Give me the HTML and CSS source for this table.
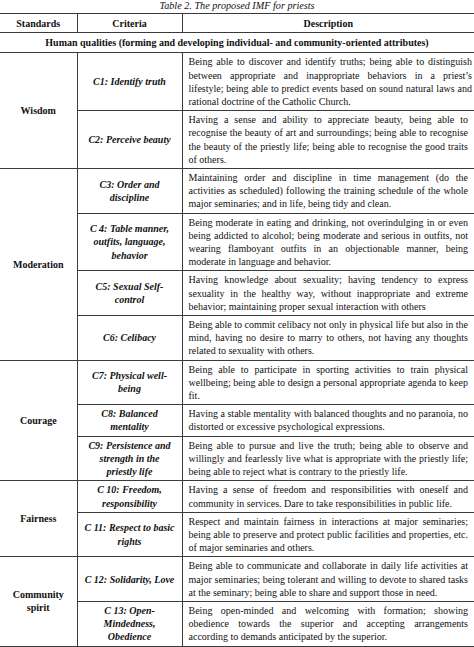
FILE: index.html
```html
<!DOCTYPE html>
<html lang="en">
<head>
<meta charset="utf-8">
<title>Table 2. The proposed IMF for priests</title>
<link rel="stylesheet" href="styles.css">
</head>
<body>
<div class="page">
  <p class="caption">Table 2. The proposed IMF for priests</p>
  <table class="imf">
    <colgroup>
      <col class="c-std">
      <col class="c-crit">
      <col class="c-desc">
    </colgroup>
    <thead>
      <tr class="head">
        <th>Standards</th>
        <th>Criteria</th>
        <th>Description</th>
      </tr>
    </thead>
    <tbody>
      <tr class="section">
        <td colspan="3">Human qualities (forming and developing individual- and community-oriented attributes)</td>
      </tr>
      <tr>
        <td class="std" rowspan="2">Wisdom</td>
        <td class="crit">C1: Identify truth</td>
        <td class="desc desc-wide"><span class="keep">Being able to discover and identify truths; being able to distinguish between appropriate and inappropriate behaviors in a priest’s</span> lifestyle; being able to predict events based on sound natural laws and rational doctrine of the Catholic Church.</td>
      </tr>
      <tr>
        <td class="crit">C2: Perceive beauty</td>
        <td class="desc">Having a sense and ability to appreciate beauty, being able to recognise the beauty of art and surroundings; being able to recognise the beauty of the priestly life; being able to recognise the good traits of others.</td>
      </tr>
      <tr>
        <td class="std" rowspan="4">Moderation</td>
        <td class="crit">C3: Order and discipline</td>
        <td class="desc">Maintaining order and discipline in time management (do the activities as scheduled) following the training schedule of the whole major seminaries; and in life, being tidy and clean.</td>
      </tr>
      <tr>
        <td class="crit">C 4: Table manner, outfits, language, behavior</td>
        <td class="desc">Being moderate in eating and drinking, not overindulging in or even being addicted to alcohol; being moderate and serious in outfits, not wearing flamboyant outfits in an objectionable manner, being moderate in language and behavior.</td>
      </tr>
      <tr>
        <td class="crit">C5: Sexual Self-control</td>
        <td class="desc">Having knowledge about sexuality; having tendency to express sexuality in the healthy way, without inappropriate and extreme behavior; maintaining proper sexual interaction with others</td>
      </tr>
      <tr>
        <td class="crit">C6: Celibacy</td>
        <td class="desc">Being able to commit celibacy not only in physical life but also in the mind, having no desire to marry to others, not having any thoughts related to sexuality with others.</td>
      </tr>
      <tr>
        <td class="std" rowspan="3">Courage</td>
        <td class="crit">C7: Physical well-being</td>
        <td class="desc">Being able to participate in sporting activities to train physical wellbeing; being able to design a personal appropriate agenda to keep fit.</td>
      </tr>
      <tr>
        <td class="crit">C8: Balanced mentality</td>
        <td class="desc">Having a stable mentality with balanced thoughts and no paranoia, no distorted or excessive psychological expressions.</td>
      </tr>
      <tr>
        <td class="crit">C9: Persistence and strength in the priestly life</td>
        <td class="desc">Being able to pursue and live the truth; being able to observe and willingly and fearlessly live what is appropriate with the priestly life; being able to reject what is contrary to the priestly life.</td>
      </tr>
      <tr>
        <td class="std" rowspan="2">Fairness</td>
        <td class="crit">C 10: Freedom, responsibility</td>
        <td class="desc">Having a sense of freedom and responsibilities with oneself and community in services. Dare to take responsibilities in public life.</td>
      </tr>
      <tr>
        <td class="crit">C 11: Respect to basic rights</td>
        <td class="desc">Respect and maintain fairness in interactions at major seminaries; being able to preserve and protect public facilities and properties, etc. of major seminaries and others.</td>
      </tr>
      <tr>
        <td class="std" rowspan="2">Community spirit</td>
        <td class="crit">C 12: Solidarity, Love</td>
        <td class="desc">Being able to communicate and collaborate in daily life activities at major seminaries; being tolerant and willing to devote to shared tasks at the seminary; being able to share and support those in need.</td>
      </tr>
      <tr>
        <td class="crit">C 13: Open-Mindedness, Obedience</td>
        <td class="desc">Being open-minded and welcoming with formation; showing obedience towards the superior and accepting arrangements according to demands anticipated by the superior.</td>
      </tr>
    </tbody>
  </table>
</div>
</body>
</html>
```

FILE: styles.css
```css
html, body {
  margin: 0;
  padding: 0;
  background: #ffffff;
}

body {
  font-family: "Liberation Serif", "Times New Roman", serif;
  font-size: 10px;
  color: #111111;
}

.page {
  width: 474px;
}

.caption {
  margin: 0;
  height: 13px;
  line-height: 11px;
  font-style: italic;
  text-align: center;
  font-size: 10.2px;
}

.imf {
  width: 474px;
  table-layout: fixed;
  border-collapse: collapse;
  line-height: 13.2px;
}

.c-std { width: 77px; }
.c-crit { width: 105px; }
.c-desc { width: 292px; }

.imf th,
.imf td {
  border: 1px solid #3a3a3a;
  vertical-align: middle;
}

.imf tr > :first-child { border-left: none; }
.imf tr > :last-child { border-right: none; }
.imf td.std { border-left: none; }

.head th {
  font-weight: bold;
  text-align: center;
  padding: 3px 4px 2px;
}

.section td {
  font-weight: bold;
  text-align: center;
  padding: 3px 4px 3px;
}

.std {
  font-weight: bold;
  text-align: center;
  padding: 2px 4px;
}

.crit {
  font-weight: bold;
  font-style: italic;
  text-align: center;
  padding: 2px 6.3px;
}

.desc {
  text-align: justify;
  padding: 2px 6px 2px 6px;
}

.desc-wide {
  padding-right: 2px;
}

.desc .keep {
  display: block;
  text-align: justify;
  text-align-last: justify;
}
```
